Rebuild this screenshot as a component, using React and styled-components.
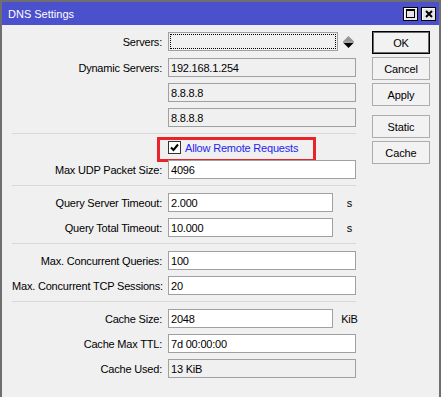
import React from "react";
import styled, { createGlobalStyle } from "styled-components";

const GlobalStyle = createGlobalStyle`
  html, body {
    margin: 0;
    padding: 0;
  }
  body {
    font-family: "Liberation Sans", Arial, sans-serif;
    font-size: 11px;
    letter-spacing: -0.2px;
    background: #f0f0f0;
    color: #000;
  }
`;

const Window = styled.div`
  width: 441px;
  height: 397px;
  box-sizing: border-box;
  border: 2px solid #6f6f6f;
  border-bottom: none;
  background: #f0f0f0;
  display: flex;
  flex-direction: column;
  overflow: hidden;
`;

const TitleBar = styled.div`
  flex-shrink: 0;
  height: 23px;
  background: #4b50cd;
  color: #fff;
  display: flex;
  align-items: center;
  padding: 0 3px 0 6px;
`;

const Title = styled.span`
  flex: 1;
  font-size: 11px;
  letter-spacing: 0;
  padding-top: 1px;
`;

const TitleButton = styled.button`
  width: 15px;
  height: 14px;
  margin-left: 3px;
  padding: 0;
  border: 1px solid #000;
  background: #e6e6e6;
  box-shadow: inset 1px 1px 0 #fff;
  display: flex;
  align-items: center;
  justify-content: center;
`;

const Body = styled.div`
  display: flex;
  padding: 7px 0 0 10px;
`;

const FormCol = styled.div`
  flex-shrink: 0;
  width: 344px;
`;

const Row = styled.div`
  display: flex;
  align-items: center;
  height: 19px;
  margin-bottom: ${(p) => (p.$mb !== undefined ? p.$mb : 6)}px;
`;

const Label = styled.label`
  flex-shrink: 0;
  width: 150px;
  margin-right: 6px;
  text-align: right;
  white-space: nowrap;
`;

const Box = styled.div`
  position: relative;
  flex-shrink: 0;
  box-sizing: border-box;
  width: ${(p) => p.$w || 188}px;
  height: 19px;
  border: 1px solid #a0a0a0;
  background: ${(p) => (p.$readonly ? "#f0f0f0" : "#fff")};
  padding: 0 2px;
  display: flex;
  align-items: center;
  white-space: nowrap;
`;

const FocusRing = styled.span`
  position: absolute;
  inset: 1px;
  border: 1px dotted #000;
`;

const Spinner = styled.svg`
  flex-shrink: 0;
  margin-left: 5px;
`;

const Unit = styled.span`
  flex-shrink: 0;
  width: 33px;
  text-align: center;
`;

const Separator = styled.div`
  height: 1px;
  background: #d9d9d9;
  margin: 3px 0 7px;
`;

const CheckRow = styled.div`
  position: relative;
  display: flex;
  align-items: center;
  height: 13px;
  padding-left: 156px;
  margin-bottom: 6px;
`;

const CheckBox = styled.span`
  width: 13px;
  height: 13px;
  box-sizing: border-box;
  border: 1px solid #333;
  background: #fff;
  display: flex;
  align-items: center;
  justify-content: center;
`;

const CheckLabel = styled.span`
  margin-left: 4px;
  color: #2525f0;
`;

const Highlight = styled.span`
  position: absolute;
  left: 145px;
  top: -4px;
  width: 159px;
  height: 25px;
  box-sizing: border-box;
  border: 3px solid #e8232a;
  pointer-events: none;
`;

const ButtonCol = styled.div`
  width: 58px;
  margin-left: 16px;
  margin-top: -1px;
  display: flex;
  flex-direction: column;
`;

const Button = styled.button`
  height: 23px;
  margin-top: ${(p) => (p.$gap ? 6 : 0)}px;
  margin-bottom: 3px;
  padding: 0;
  border: 1px solid ${(p) => (p.$default ? "#000" : "#adadad")};
  box-shadow: ${(p) => (p.$default ? "inset 0 0 0 1px #6a6a6a" : "none")};
  background: #f2f2f2;
  font-family: inherit;
  font-size: 11px;
  letter-spacing: -0.1px;
  color: #000;
`;

const fields = [
  [
    { label: "Max. Concurrent Queries:", value: "100" },
    { label: "Max. Concurrent TCP Sessions:", value: "20" },
  ],
  [
    { label: "Cache Size:", value: "2048", w: 165, unit: "KiB" },
    { label: "Cache Max TTL:", value: "7d 00:00:00" },
    { label: "Cache Used:", value: "13 KiB", readonly: true },
  ],
];

const renderRow = ({ label, value, w, unit, readonly }, key) => (
  <Row key={key}>
    <Label>{label}</Label>
    <Box $w={w} $readonly={readonly}>
      {value}
    </Box>
    {unit && <Unit>{unit}</Unit>}
  </Row>
);

export default function App() {
  return (
    <>
      <GlobalStyle />
      <Window>
        <TitleBar>
          <Title>DNS Settings</Title>
          <TitleButton aria-label="maximize">
            <svg width="9" height="9" viewBox="0 0 9 9">
              <rect x="0.5" y="0.5" width="8" height="8" fill="none" stroke="#000" />
              <rect x="0" y="0" width="9" height="2" fill="#000" />
            </svg>
          </TitleButton>
          <TitleButton aria-label="close">
            <svg width="8" height="8" viewBox="0 0 8 8">
              <path d="M1 1 L7 7 M7 1 L1 7" stroke="#000" strokeWidth="2" />
            </svg>
          </TitleButton>
        </TitleBar>
        <Body>
          <FormCol>
            <Row $mb={7}>
              <Label>Servers:</Label>
              <Box $w={170} $readonly>
                <FocusRing />
              </Box>
              <Spinner width="11" height="12" viewBox="0 0 11 12">
                <polygon points="0.5,5 5.5,0 10.5,5" fill="#959595" />
                <rect x="0" y="5.5" width="11" height="1" fill="#555" />
                <polygon points="0.5,7 10.5,7 5.5,12" fill="#000" />
              </Spinner>
            </Row>
            <Row>
              <Label>Dynamic Servers:</Label>
              <Box $readonly>192.168.1.254</Box>
            </Row>
            <Row>
              <Label />
              <Box $readonly>8.8.8.8</Box>
            </Row>
            <Row>
              <Label />
              <Box $readonly>8.8.8.8</Box>
            </Row>
            <Separator />
            <CheckRow>
              <CheckBox>
                <svg width="9" height="9" viewBox="0 0 9 9">
                  <path d="M1 4.5 L3.5 7 L8 1.5" fill="none" stroke="#000" strokeWidth="2" />
                </svg>
              </CheckBox>
              <CheckLabel>Allow Remote Requests</CheckLabel>
              <Highlight />
            </CheckRow>
            <Row>
              <Label>Max UDP Packet Size:</Label>
              <Box>4096</Box>
            </Row>
            <Separator />
            <Row>
              <Label>Query Server Timeout:</Label>
              <Box $w={165}>2.000</Box>
              <Unit>s</Unit>
            </Row>
            <Row>
              <Label>Query Total Timeout:</Label>
              <Box $w={165}>10.000</Box>
              <Unit>s</Unit>
            </Row>
            {fields.map((group, i) => (
              <React.Fragment key={i}>
                <Separator />
                {group.map(renderRow)}
              </React.Fragment>
            ))}
          </FormCol>
          <ButtonCol>
            <Button $default>OK</Button>
            <Button>Cancel</Button>
            <Button>Apply</Button>
            <Button $gap>Static</Button>
            <Button>Cache</Button>
          </ButtonCol>
        </Body>
      </Window>
    </>
  );
}
